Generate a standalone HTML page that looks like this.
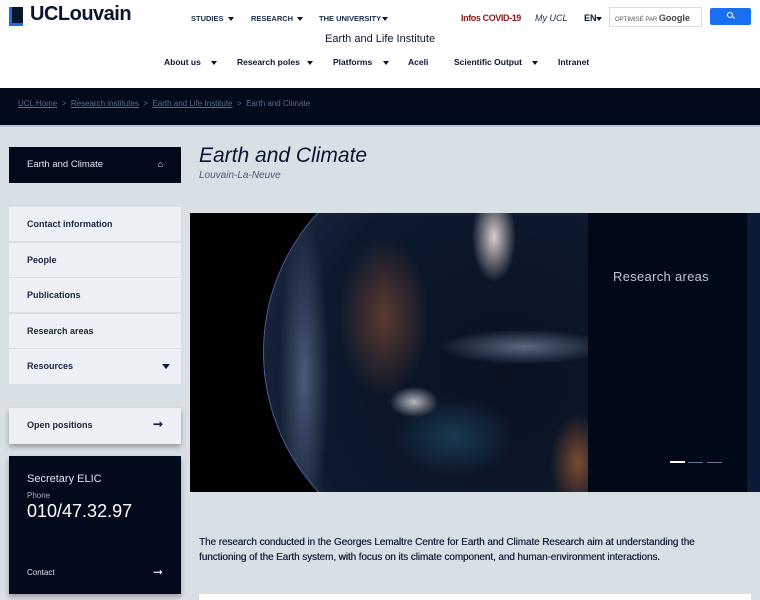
<!DOCTYPE html>
<html><head><meta charset="utf-8"><style>
*{margin:0;padding:0;box-sizing:border-box}
body{width:760px;height:600px;overflow:hidden;background:#d8dfe5;font-family:"Liberation Sans",sans-serif;position:relative;color:#0a1530}
.abs{position:absolute}
.hdr{left:0;top:0;width:760px;height:88px;background:#fff}
.band{left:0;top:88px;width:760px;height:39px;background:#020a1c;border-bottom:2px solid #b8c2cc}
.top{font-size:7.5px;font-weight:bold;color:#1b2a4a;top:14px}
.nav{font-size:8.5px;font-weight:bold;color:#0a1530;top:57px}
.t{position:absolute;width:0;height:0;border-left:3px solid transparent;border-right:3px solid transparent;border-top:4px solid #0a1530}
.bc{top:99px;font-size:8px;color:#5b6c88}
.bc u{text-decoration:underline}
.menu{left:9px;width:172px;height:35px;background:#edf1f5;font-size:9px;color:#1a2540;padding:12px 18px;font-weight:bold}
</style></head><body>
<div class="abs hdr"></div>
<div class="abs" style="left:9px;top:7px;width:14px;height:19px;background:#1a6fd8"></div>
<div class="abs" style="left:12px;top:7px;width:11px;height:16px;background:#0a1530"></div>
<div class="abs" style="left:30px;top:3px;font-size:20px;font-weight:bold;color:#0a1530;letter-spacing:-0.5px">UCLouvain</div>
<div class="abs top" style="left:191px">STUDIES</div><div class="t" style="left:228px;top:17px"></div>
<div class="abs top" style="left:251px">RESEARCH</div><div class="t" style="left:297px;top:17px"></div>
<div class="abs top" style="left:319px">THE UNIVERSITY</div><div class="t" style="left:382px;top:17px"></div>
<div class="abs" style="left:461px;top:13px;font-size:9px;font-weight:bold;color:#8b1a1a;letter-spacing:-0.4px">Infos COVID-19</div>
<div class="abs" style="left:535px;top:13px;font-size:9px;font-style:italic;color:#1b2a4a">My UCL</div>
<div class="abs" style="left:584px;top:13px;font-size:9px;font-weight:bold;color:#0a1530">EN</div><div class="t" style="left:596px;top:17px"></div>
<div class="abs" style="left:609px;top:7px;width:93px;height:20px;border:1px solid #ddd;padding:5px 5px;font-size:6px;color:#555">OPTIMISÉ PAR <b style="font-size:9px;color:#444">Google</b></div>
<div class="abs" style="left:710px;top:8px;width:41px;height:17px;background:#1a6ff0;border-radius:2px"></div>
<div class="abs" style="left:727px;top:12px;width:6px;height:6px;border:1.3px solid #fff;border-radius:50%"></div>
<div class="abs" style="left:732px;top:17px;width:3px;height:1.3px;background:#fff;transform:rotate(45deg)"></div>
<div class="abs" style="left:325px;top:33px;font-size:11px;color:#0a1530">Earth and Life Institute</div>
<div class="abs nav" style="left:164px">About us</div><div class="t" style="left:211px;top:61px"></div>
<div class="abs nav" style="left:237px">Research poles</div><div class="t" style="left:307px;top:61px"></div>
<div class="abs nav" style="left:333px">Platforms</div><div class="t" style="left:383px;top:61px"></div>
<div class="abs nav" style="left:408px">Aceli</div>
<div class="abs nav" style="left:454px">Scientific Output</div><div class="t" style="left:532px;top:61px"></div>
<div class="abs nav" style="left:558px">Intranet</div>
<div class="abs band"></div>
<div class="abs bc" style="left:18px"><u>UCL Home</u> &nbsp;&gt;&nbsp; <u>Research institutes</u> &nbsp;&gt;&nbsp; <u>Earth and Life Institute</u> &nbsp;&gt;&nbsp; Earth and Climate</div>

<div class="abs" style="left:9px;top:147px;width:172px;height:36px;background:#020a1c;color:#dfe4ee;font-size:9.5px;padding:12px 18px">Earth and Climate<span style="float:right;font-size:9px;font-weight:bold">&#8962;</span></div>
<div class="abs" style="left:199px;top:144px;font-size:21px;font-style:italic;color:#0a1530">Earth and Climate</div>
<div class="abs" style="left:199px;top:170px;font-size:10px;font-style:italic;color:#4a5a7a">Louvain-La-Neuve</div>

<div class="abs menu" style="top:207px;height:34px">Contact information</div>
<div class="abs menu" style="top:243px;height:34px">People</div>
<div class="abs menu" style="top:278px;height:34px">Publications</div>
<div class="abs menu" style="top:314px;height:34px">Research areas</div>
<div class="abs menu" style="top:349px">Resources</div><div class="t" style="left:162px;top:364px;border-top-width:5px;border-left-width:4px;border-right-width:4px"></div>
<div class="abs menu" style="top:408px;height:36px;box-shadow:0 3px 5px rgba(0,0,0,.3);font-size:9px">Open positions<span style="float:right;font-size:12px;margin-top:-3px">&#10142;</span></div>
<div class="abs" style="left:9px;top:456px;width:172px;height:138px;background:#020a1c;color:#dfe4ee;padding:17px 18px;box-shadow:0 3px 5px rgba(0,0,0,.3)">
<div style="font-size:11px">Secretary ELIC</div>
<div style="font-size:8px;margin-top:6px;color:#aab">Phone</div>
<div style="font-size:18px;margin-top:1px;color:#fff">010/47.32.97</div>
<div style="font-size:8px;margin-top:46px">Contact<span style="float:right;font-size:12px;margin-top:-3px">&#10142;</span></div>
</div>

<div class="abs" style="left:190px;top:213px;width:570px;height:279px;background:#000;overflow:hidden">
<div class="abs" style="left:73px;top:-67px;width:412px;height:412px;border-radius:50%;border:1px solid #4a5a9a;background:
radial-gradient(ellipse 22px 45px at 230px 90px,#d8cccc,transparent),
radial-gradient(ellipse 45px 80px at 120px 170px,#5a3a30,transparent),
radial-gradient(ellipse 35px 22px at 150px 255px,#b8b8c0 ,transparent 70%),
radial-gradient(ellipse 120px 25px at 260px 200px,#5a6a80,transparent 70%),
radial-gradient(ellipse 60px 40px at 190px 290px,#1a3a50,transparent),
radial-gradient(ellipse 50px 40px at 140px 390px,#7a6a68,transparent),
radial-gradient(ellipse 25px 160px at 40px 230px,#4a5a78,transparent),
radial-gradient(ellipse 40px 20px at 290px 480px,#8a8a96,transparent),
radial-gradient(circle at 240px 230px,#0a1222 0%,#0d1a2e 60%,#26324e 100%)"></div>
<div class="abs" style="left:360px;top:200px;width:40px;height:100px;background:radial-gradient(ellipse at 70% 50%,#7a4a30,transparent 70%)"></div>
<div class="abs" style="left:398px;top:0;width:159px;height:279px;background:#010817"></div>
<div class="abs" style="left:557px;top:0;width:13px;height:279px;background:#0a1a38"></div>
<div class="abs" style="left:423px;top:56px;font-size:13px;color:#bcc8da;letter-spacing:0.3px">Research areas</div>
<div class="abs" style="left:480px;top:248px;width:15px;height:2px;background:#fff"></div>
<div class="abs" style="left:498px;top:249px;width:15px;height:1px;background:#6a7890"></div>
<div class="abs" style="left:517px;top:249px;width:15px;height:1px;background:#6a7890"></div>
</div>

<div class="abs" style="left:199px;top:535px;width:545px;font-size:10px;line-height:15px;color:#1a2540;letter-spacing:-0.1px;text-shadow:0.3px 0 0 #1a2540">The research conducted in the Georges Lemaltre Centre for Earth and Climate Research aim at understanding the functioning of the Earth system, with focus on its climate component, and human-environment interactions.</div>
<div class="abs" style="left:199px;top:594px;width:552px;height:6px;background:#fff"></div>
</body></html>
